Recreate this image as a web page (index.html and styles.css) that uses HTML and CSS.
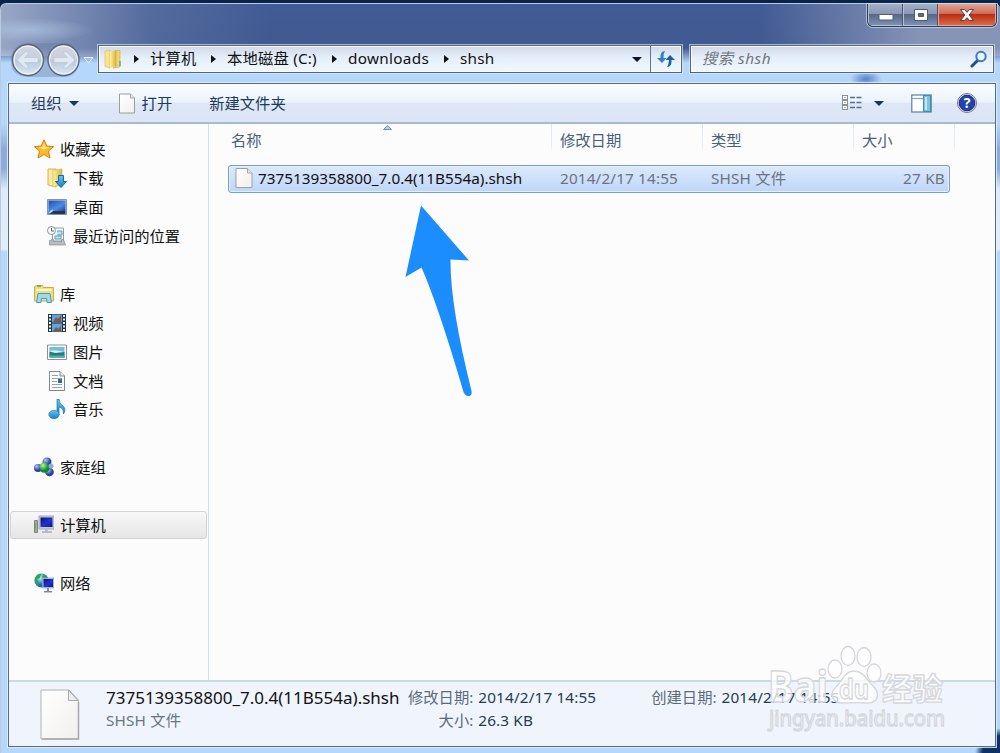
FILE: index.html
```
<!DOCTYPE html>
<html lang="zh-CN">
<head>
    <meta charset="UTF-8">
    <meta name="viewport" content="width=device-width, initial-scale=1.0">
    <title>shsh</title>
    <link rel="stylesheet" href="styles.css">
</head>
<body>
    <svg width="0" height="0" class="defs" aria-hidden="true">
        <defs>
            <linearGradient id="gold" x1="0" x2="1"><stop offset="0" stop-color="#fff2a6"/><stop offset="1" stop-color="#d9b23c"/></linearGradient>
            <linearGradient id="paper" x1="0" y1="0" x2="1" y2="1"><stop offset="0" stop-color="#ffffff"/><stop offset="1" stop-color="#f1f0ed"/></linearGradient>
            <linearGradient id="screen" x1="0" y1="0" x2="1" y2="1"><stop offset="0" stop-color="#08107a"/><stop offset="0.55" stop-color="#2433cc"/><stop offset="1" stop-color="#0a1290"/></linearGradient>
            <linearGradient id="desk" x1="0" y1="0" x2="1" y2="1"><stop offset="0" stop-color="#1d4db0"/><stop offset="0.6" stop-color="#4f8be6"/><stop offset="1" stop-color="#1b4595"/></linearGradient>
            <linearGradient id="blue" x1="0" y1="0" x2="0" y2="1"><stop offset="0" stop-color="#6cc3f0"/><stop offset="1" stop-color="#137fc8"/></linearGradient>
            <linearGradient id="round" x1="0" y1="0" x2="0" y2="1"><stop offset="0" stop-color="#d3d8e3"/><stop offset="0.48" stop-color="#c5cfdd"/><stop offset="0.52" stop-color="#b9c8da"/><stop offset="1" stop-color="#d9e9f8"/></linearGradient>
            <radialGradient id="ball" cx="0.35" cy="0.3"><stop offset="0" stop-color="#b9c4ff"/><stop offset="1" stop-color="#2a3ea8"/></radialGradient>
            <radialGradient id="green" cx="0.35" cy="0.3"><stop offset="0" stop-color="#b8f5a0"/><stop offset="1" stop-color="#128a2a"/></radialGradient>
            <radialGradient id="globe" cx="0.4" cy="0.3"><stop offset="0" stop-color="#c4f0ff"/><stop offset="1" stop-color="#1470b4"/></radialGradient>
        </defs>
    </svg>

    <div class="window">
        <header class="titlebar">
            <div class="controls">
                <button class="control"><svg width="16" height="8" viewBox="0 0 16 8"><rect x="1" y="1.5" width="14" height="5.5" rx="1" fill="#fff" stroke="#525a70"/></svg></button>
                <button class="control"><svg width="16" height="14" viewBox="0 0 16 14"><path d="M1.500 1.500h13v11h-13zM5.500 5.500v3h5v-3z" fill="#fff" fill-rule="evenodd" stroke="#525a70"/></svg></button>
                <button class="control close"><svg width="16" height="14" viewBox="0 0 16 14"><path d="M1.500 1.500h4L8 4.300l2.500-2.800h4L10.200 7l4.300 5.500h-4L8 9.700l-2.500 2.800h-4L5.800 7z" fill="#fff" stroke="#5a3a44"/></svg></button>
            </div>
        </header>

        <nav class="navbar">
            <svg class="arrows" width="88" height="36" viewBox="0 0 88 36">
                <path d="M3 14Q7 1 20 1h38q9 0 13 12v10q-4 11-13 12H20Q5 34 3 23z" fill="#61749a" opacity=".35"/>
                <circle cx="20" cy="18" r="15.500" fill="url(#round)" stroke="#586476" stroke-width="1.300"/>
                <circle cx="20" cy="18" r="14" fill="none" stroke="#f4f7fb" stroke-width="1"/>
                <path d="M9 18l8.500-8h4l-5 5.500H30v5H16.500l5 5.500h-4z" fill="#e2e9f2" stroke="#b6c2d0" stroke-width=".6"/>
                <circle cx="55.500" cy="18" r="15.500" fill="url(#round)" stroke="#586476" stroke-width="1.300"/>
                <circle cx="55.500" cy="18" r="14" fill="none" stroke="#f4f7fb" stroke-width="1"/>
                <path d="M67 18l-8.500-8h-4l5 5.500H46v5h13.500l-5 5.500h4z" fill="#e2e9f2" stroke="#b6c2d0" stroke-width=".6"/>
                <path d="M76 15.500h9l-4.500 5.500z" fill="#a9bdd8" stroke="#eaf3fd"/>
            </svg>
            <div class="address">
                <svg class="folder" width="18" height="20" viewBox="0 0 18 20"><path d="M1 2l5-1v18l-5-1.500z" fill="#f7e58c" stroke="#d8bd4c" stroke-width=".6"/><path d="M6 3l6-2v16l-6 2z" fill="url(#gold)"/><path d="M12 1.500h4V18l-7 1 3-2z" fill="#efd566" stroke="#c9a73b" stroke-width=".6"/><path d="M16 12v5" stroke="#62a9b5" stroke-width="1.500"/></svg>
                <div class="crumbs">
                    <i class="sep"></i><span class="c1">计算机</span>
                    <i class="sep"></i><span class="c2">本地磁盘 (C:)</span>
                    <i class="sep"></i><span class="c3">downloads</span>
                    <i class="sep"></i><span class="c4">shsh</span>
                </div>
                <i class="caret"></i>
                <div class="refresh">
                    <svg width="20" height="18" viewBox="0 0 20 18"><path d="M9 1Q4 1 4.500 8H1l5 5 4.500-5H7.500Q7 4 9 1z" fill="#2f82c4"/><path d="M11 17q5 0 4.500-7H19l-5-5-4.500 5h3.500q0 4-2 7z" fill="#1f5e9c"/></svg>
                </div>
            </div>
            <div class="search">
                <span>搜索 shsh</span>
                <svg width="18" height="18" viewBox="0 0 18 18"><path d="M2 16l5.500-5.500" stroke="#234e86" stroke-width="3" stroke-linecap="round"/><circle cx="11" cy="6.500" r="4.700" fill="#eef6fc" stroke="#3480bd" stroke-width="2"/></svg>
            </div>
        </nav>

        <main class="client">
            <div class="toolbar">
                <span class="organize">组织</span><i class="caret"></i>
                <svg class="open-icon" width="18" height="21" viewBox="0 0 18 21"><path d="M1.500 1h11L16.500 5v15h-15z" fill="url(#paper)" stroke="#9d9d9d"/><path d="M12.500 1v4h4" fill="#e5e5e5" stroke="#a8a8a8"/></svg>
                <span class="open">打开</span>
                <span class="new-folder">新建文件夹</span>
                <svg class="view" width="20" height="16" viewBox="0 0 20 16"><g fill="#fff" stroke="#8b8f94"><rect x=".5" y=".5" width="5" height="4"/><rect x=".5" y="5.500" width="5" height="4"/><rect x=".5" y="10.500" width="5" height="4"/></g><path d="M3 2v1M3 7v1M3 12v1" stroke="#456"/><path d="M8 2.500h12M8 7.500h12M8 12.500h12" stroke="#5c6f86" stroke-width="1.300" stroke-dasharray="5 1.500"/></svg>
                <i class="caret view-caret"></i>
                <svg class="pane" width="21" height="19" viewBox="0 0 21 19"><rect x=".8" y="1" width="19.400" height="17" fill="#fff" stroke="#5f7f9d" stroke-width="1.200"/><path d="M1 4.500h12" stroke="#89a0b5" stroke-width="1.200"/><rect x="12.500" y="1.500" width="7" height="16" fill="#79c3de" stroke="#418eaf"/><path d="M15 3v13" stroke="#c1e8f3" stroke-width="2"/></svg>
                <svg class="help" width="22" height="22" viewBox="0 0 22 22"><circle cx="11" cy="11" r="9.500" fill="#dedede" stroke="#777b88"/><circle cx="11" cy="11" r="7.800" fill="#2443b0" stroke="#172d82"/><text x="11" y="16" text-anchor="middle" class="help-mark">?</text></svg>
            </div>

            <div class="middle">
                <aside class="sidebar">
                    <ul>
                        <li class="root"><svg width="20" height="20" viewBox="0 0 20 20"><path d="M10 .8l2.800 6.200 6.700.6-5 4.600 1.500 6.800-6-3.600L4 19l1.500-6.800-5-4.600 6.700-.6z" fill="#ffbd2b" stroke="#d27b16"/><path d="M10 4l1.500 4 4 .5-6 2-4-2 3-.5z" fill="#ffe784"/></svg>收藏夹</li>
                        <li><svg width="20" height="20" viewBox="0 0 20 20"><path d="M1 1h8v18l-8-2z" fill="#f9e9a1" stroke="#d4b956"/><path d="M6 2l9-1v16l-9 2z" fill="url(#gold)" stroke="#d4b956" stroke-width=".7"/><path d="M11.500 7.500h5v6h3L14 19.500 8.500 13.500h3z" fill="url(#blue)" stroke="#16679d"/></svg>下载</li>
                        <li><svg width="20" height="20" viewBox="0 0 20 20"><path d="M.5 2.500h19v15H.5z" fill="#c9d2de" stroke="#8393aa"/><path d="M1.500 3.500h17v10.500h-17z" fill="url(#desk)"/><path d="M1.500 14h17v3h-17z" fill="#27364f"/><path d="M2 16l4-3" stroke="#8be0f4" stroke-width="2"/></svg>桌面</li>
                        <li><svg width="20" height="20" viewBox="0 0 20 20"><path d="M5.500 2h11v13h-11z" fill="#f6f9fc" stroke="#909ba5"/><path d="M10 5h5v4h-5M8 10h6v3H8z" fill="#b9e4f2" stroke="#5c9db8"/><path d="M2.500 14.500h2v-1h2v2h8v-2h2l2 5.500h-16z" fill="#b8bdc1" stroke="#868b90" stroke-width=".7"/><circle cx="4.500" cy="4.500" r="4" fill="#f8fafb" stroke="#8d979f"/><path d="M4.500 2v3h2.500" fill="none" stroke="#516575"/></svg>最近访问的位置</li>
                    </ul>
                    <ul>
                        <li class="root"><svg width="20" height="20" viewBox="0 0 20 20"><path d="M.5 17V2.500l2-1h6l1 2h10V17z" fill="#f1dc80" stroke="#c8ad4d"/><path d="M2 6h16" stroke="#fff5bf" stroke-width="2"/><path d="M2.500 18.500l1.500-9h12l1.500 9h-4.500l-.5-4H7.500l-.5 4z" fill="#9fd7ee" stroke="#489bc2"/><path d="M3 2h4" stroke="#75b84b" stroke-width="2"/></svg>库</li>
                        <li><svg width="20" height="20" viewBox="0 0 20 20"><path d="M1 1h18v18H1z" fill="#263640"/><path d="M5 1.500h10v8H5zM5 10.500h10v8H5z" fill="#5ba6df"/><path d="M6 9l3-5 2 2 3-4v7zM6 18l3-4 2 2 3-3v5z" fill="#8c5145"/><path d="M3 2v17M17 2v17" stroke="#e4f0ed" stroke-width="2" stroke-dasharray="2 1.500"/></svg>视频</li>
                        <li><svg width="20" height="20" viewBox="0 0 20 20"><path d="M.5 3h19v14.500H.5z" fill="#fff" stroke="#8a9296"/><path d="M2.500 5h15v10.500h-15z" fill="#70bddc"/><path d="M2.500 9q5-2 15 1v1h-15z" fill="#d4f0e9"/><path d="M2.500 9.500l6 1.500 9-1v5.500h-15z" fill="#247c79"/><path d="M2.500 13.500h15v2h-15z" fill="#55a9b8"/></svg>图片</li>
                        <li><svg width="20" height="20" viewBox="0 0 20 20"><path d="M2.500.500H13L17.500 5v14.500h-15z" fill="#fff" stroke="#7f878e"/><path d="M13 .5V5h4.500" fill="#e7edf2" stroke="#7f878e"/><path d="M5 4.500h6M5 7.500h10M5 10.500h5M5 13.500h10M5 16.500h10" stroke="#8da5bc"/><path d="M11 8h4v4h-4z" fill="#276ba9"/></svg>文档</li>
                        <li><svg width="20" height="20" viewBox="0 0 20 20"><path d="M10 0h2q0 4 4 7 3.500 3 .5 8 .5-6-4.500-7v8h-2z" fill="url(#blue)" stroke="#1674ae" stroke-width=".7"/><ellipse cx="7" cy="15.500" rx="5.300" ry="4.200" fill="url(#blue)" stroke="#1674ae" stroke-width=".5"/></svg>音乐</li>
                    </ul>
                    <ul>
                        <li class="root"><svg width="20" height="20" viewBox="0 0 20 20"><circle cx="13" cy="5" r="4.500" fill="url(#ball)"/><circle cx="4" cy="11" r="4" fill="url(#ball)"/><circle cx="15.500" cy="15" r="4.300" fill="url(#ball)"/><circle cx="10.500" cy="10.500" r="5.300" fill="url(#green)"/><circle cx="17" cy="9" r="2.500" fill="#8dadcb"/></svg>家庭组</li>
                    </ul>
                    <ul>
                        <li class="root selected"><svg width="20" height="20" viewBox="0 0 20 20"><path d="M.5 5.500h3v12h-3z" fill="#a1aa9d" stroke="#80877e"/><path d="M1.500 8v6" stroke="#59bd57"/><path d="M5 1h15v13H5z" fill="#c6ccda" stroke="#a5aab8"/><path d="M6.500 2.500h12v9.500h-12z" fill="url(#screen)"/><path d="M11 14h3v2h4v2H8v-2h3z" fill="#b7bdc4"/></svg>计算机</li>
                    </ul>
                    <ul>
                        <li class="root"><svg width="20" height="20" viewBox="0 0 20 20"><circle cx="7.500" cy="7.500" r="7" fill="url(#globe)"/><path d="M1 5q3-5 6-4l-1 4-3 1 2 4-1 3Q0 10 1 5zM10 1l4 4-3 2-3-3z" fill="#31a451"/><path d="M8.500 5h11.500v10H8.500z" fill="#bcc7de" stroke="#8e9bbb" stroke-width=".7"/><path d="M9.500 6h9.500v8H9.500z" fill="url(#screen)"/><path d="M13 15h2v3h3v1.500h-8V18h3z" fill="#7d8b9e"/></svg>网络</li>
                    </ul>
                </aside>

                <section class="files">
                    <div class="columns">
                        <span>名称</span><span>修改日期</span><span>类型</span><span>大小</span>
                        <svg class="sort" width="9" height="5" viewBox="0 0 9 5"><path d="M.5 4.500l4-4 4 4z" fill="#a7d4e8" stroke="#4c7f9c" stroke-width=".8"/></svg>
                    </div>
                    <div class="file">
                        <span class="file-name"><svg width="18" height="20" viewBox="0 0 18 20"><path d="M1 .5h11.500L17 5v14.500H1z" fill="url(#paper)" stroke="#9d9fa1"/><path d="M12.500.5V5H17" fill="#e8e8e8" stroke="#aaa"/></svg><span>7375139358800_7.0.4(11B554a).shsh</span></span>
                        <span class="wide">2014/2/17 14:55</span>
                        <span class="wide">SHSH 文件</span>
                        <span class="size">27 KB</span>
                    </div>
                    <svg class="pointer" width="70" height="196" viewBox="0 0 70 196"><path d="M17 .5L65 55.500L46.500 54.500Q46 100 67.500 186Q68.500 191 64 191Q61.500 191 59.500 187Q34 100 17.500 62.500L1.500 72z" fill="#1c8dff"/></svg>
                </section>
            </div>

            <footer class="details">
                <svg class="big-file" width="40" height="51" viewBox="0 0 40 51"><path d="M1 1h28l9.500 10v39H1z" fill="url(#paper)" stroke="#b1b2b2"/><path d="M38.500 13v37H2" fill="none" stroke="#a7a8a9" stroke-width="1.500"/><path d="M28.500 1l9.500 10.500h-9.500z" fill="#eee" stroke="#aaa"/></svg>
                <div class="detail-name"><strong>7375139358800_7.0.4(11B554a).shsh</strong><span class="wide">SHSH 文件</span></div>
                <dl class="modified">
                    <dt>修改日期:</dt><dd class="wide">2014/2/17 14:55</dd>
                    <dt>大小:</dt><dd class="wide">26.3 KB</dd>
                </dl>
                <dl class="created"><dt>创建日期:</dt><dd class="wide">2014/2/17 14:55</dd></dl>
            </footer>
        </main>
    </div>

    <svg class="watermark" width="190" height="96" viewBox="0 0 190 96">
        <g fill="#fff" fill-opacity=".75" stroke="#d6d7dc" stroke-width="1.300">
            <ellipse cx="67" cy="28" rx="7" ry="9"/><ellipse cx="80" cy="15" rx="7" ry="9.500"/><ellipse cx="96" cy="16" rx="7" ry="9.500"/><ellipse cx="106" cy="32" rx="7" ry="9"/>
            <path d="M86 30c-10 0-12 11-18 16-7 6-4 16 6 16 8 0 16-1 24 0 11 1 15-8 8-16-7-6-10-16-20-16z"/>
            <text x="0" y="61" class="brand" textLength="60" lengthAdjust="spacingAndGlyphs">Bai</text>
            <text x="71" y="58" class="brand-du" textLength="30" lengthAdjust="spacingAndGlyphs">du</text>
            <text x="114" y="59" class="brand-cn" textLength="61" lengthAdjust="spacingAndGlyphs">经验</text>
            <text x="1" y="85" class="site" textLength="176" lengthAdjust="spacingAndGlyphs">jingyan.baidu.com</text>
        </g>
    </svg>
</body>
</html>
```
FILE: styles.css
```
* {
    box-sizing: border-box;
}

body {
    margin: 0;
    width: 1000px;
    height: 753px;
    overflow: hidden;
    background: #082449;
    font-family: "Noto Sans", "Noto Sans CJK SC", sans-serif;
    font-size: 15.3px;
    line-height: 20px;
    color: #111;
}

.defs {
    position: absolute;
}

svg {
    display: block;
    flex: none;
}

ul, dl, dd {
    margin: 0;
    padding: 0;
    list-style: none;
}

.window {
    display: flex;
    flex-direction: column;
    height: 750px;
    margin-top: 3px;
    padding: 0 3px 6px 8px;
    border: 1px solid #bac9df;
    border-width: 1px 0 0 1px;
    border-radius: 6px 6px 0 0;
    background:
        radial-gradient(ellipse 65px 12px at 28px 26px, rgba(180, 205, 235, .6), transparent),
        radial-gradient(ellipse 16px 9px at 865px 75px, rgba(80, 120, 195, .9), transparent),
        radial-gradient(circle 26px at 1000px 750px, #0d3263 70%, transparent),
        linear-gradient(90deg, rgba(190, 199, 220, .7), rgba(110, 130, 172, .4) 15%, transparent 27%, transparent 76%, rgba(170, 178, 202, .65) 92%, rgba(170, 178, 202, .65)) 0 0 / 100% 52px no-repeat,
        linear-gradient(#425c94 0, #405990 44px, #b5d7fb 59px, #b5d7fb 120px, #8eabd8 145px, #8eabd8 165px, #dceafb 185px, #e2eefb 245px, #b5d7fb 248px, #b5d7fb);
}

/* title bar */
.titlebar {
    display: flex;
    justify-content: flex-end;
    flex: none;
    height: 39px;
}

.controls {
    display: flex;
    height: 23px;
    border: 1px solid #2b3b5c;
    border-top: 0;
    border-radius: 0 0 6px 6px;
    box-shadow: 0 0 0 1px rgba(224, 232, 245, .6);
    overflow: hidden;
}

.control {
    display: flex;
    align-items: center;
    justify-content: center;
    width: 35px;
    padding: 0;
    border: 1px solid #b7c0d2;
    border-right-color: #46546f;
    border-top: 0;
    background: linear-gradient(#a3afc6, #8997b4 48%, #566787 50%, #7e90b3);
}

.control:first-child {
    padding-top: 5px;
}

.close {
    width: 58px;
    border-color: #e4a69c;
    background: linear-gradient(#e3a493, #ce6e5b 45%, #b92e15 50%, #d96b43);
}

/* address and search */
.navbar {
    display: flex;
    flex: none;
    height: 40px;
}

.arrows {
    width: 88px;
    margin: -1px 0 0 -1px;
}

.address,
.search {
    display: flex;
    align-items: center;
    height: 28px;
    margin-top: 2px;
    border: 1px solid #536581;
    box-shadow: 0 0 0 1px rgba(220, 232, 248, .65), inset 0 0 0 1px #fafdff;
    background: linear-gradient(#d2d7e6, #e5effa 45%, #f1f8ff);
}

.address {
    width: 584px;
    margin-left: 2px;
}

.folder {
    margin-left: 5px;
}

.crumbs {
    display: flex;
    flex: 1;
    align-items: center;
}

.crumbs span {
    margin-top: -3px;
    white-space: nowrap;
    letter-spacing: .2px;
}

.sep {
    flex: none;
    border: 4px solid transparent;
    border-left: 5px solid #111;
    border-right: 0;
    margin: 0 11px 0 13px;
}

.sep:first-child {
    margin-left: 12px;
}

.c1 {
    width: 48px;
}

.c2 {
    width: 92px;
}

.crumbs .c3 {
    width: 83px;
    letter-spacing: .3px;
}

.caret {
    flex: none;
    border: 5px solid transparent;
    border-top-color: #17365f;
    border-bottom: 0;
}

.address .caret {
    margin-right: 8px;
    border-top-color: #11112a;
}

.refresh {
    display: flex;
    align-items: center;
    justify-content: center;
    width: 31px;
    height: 26px;
    border-left: 1px solid #65758d;
}

.search {
    justify-content: space-between;
    width: 304px;
    margin-left: 8px;
    padding: 0 5px 0 11px;
    color: #71757e;
    font-style: italic;
}

.search span {
    margin-top: -2px;
    letter-spacing: .5px;
}

/* client area */
.client {
    display: flex;
    flex: 1;
    flex-direction: column;
    min-height: 0;
    width: 988px;
    margin-left: -1px;
    border: 1px solid #566a84;
    background: #fcfcfd;
    box-shadow: 0 0 0 1px rgba(230, 241, 252, .8);
}

.toolbar {
    display: flex;
    flex: none;
    align-items: center;
    height: 40px;
    padding: 0 17px 0 22px;
    border-bottom: 2px solid #a9b9cf;
    background: linear-gradient(#fafdff, #eaf3fc 48%, #dde7f5 50%, #dbe5f3);
    color: #1e395b;
}

.toolbar span {
    margin-top: -1px;
}

.toolbar .caret {
    margin-left: 7px;
}

.open-icon {
    margin-left: 39px;
}

.open {
    margin-left: 6px;
}

.new-folder {
    margin-left: 37px;
}

.view {
    margin-left: auto;
}

.toolbar .view-caret {
    margin: 0 27px 0 12px;
}

.help {
    margin-left: 24px;
}

.help-mark {
    fill: #fff;
    font-size: 14px;
    font-weight: 700;
}

.middle {
    display: flex;
    flex: 1;
    min-height: 0;
}

.sidebar {
    display: flex;
    flex-direction: column;
    gap: 28.9px;
    flex: none;
    width: 200px;
    padding: 11px 1px 0;
    border-right: 1px solid #cfdfed;
}

.sidebar li {
    display: flex;
    align-items: center;
    gap: 6px;
    height: 28.9px;
    padding-left: 36px;
    border: 1px solid transparent;
}

.sidebar .root {
    padding-left: 23px;
}

.sidebar .selected {
    border-color: #d3d3d3;
    border-radius: 3px;
    background: linear-gradient(#f8f8f8, #e6e6e6);
}

.files {
    position: relative;
    flex: 1;
}

.columns,
.file {
    display: grid;
    grid-template-columns: 324px 151px 151px 101px;
}

.columns {
    position: relative;
    height: 33px;
    margin-left: 19px;
    color: #4b6078;
}

.columns span {
    height: 29px;
    padding: 6px 0 0 3px;
    border-right: 1px solid;
    border-image: linear-gradient(#dce7f3, #e5edf6 70%, transparent) 1;
}

.columns span + span {
    padding-left: 8px;
}

.sort {
    position: absolute;
    left: 155px;
    top: 1px;
}

.file {
    grid-template-columns: 324px 151px 151px 1fr;
    align-items: center;
    width: 722px;
    height: 28px;
    margin: 8px 0 0 19px;
    border: 1px solid #7e9ebd;
    border-radius: 3px;
    background: linear-gradient(#dce9fc, #bfd6fa);
    box-shadow: inset 0 0 0 1px #e3effd;
    color: #6c7480;
}

.file > span {
    padding-left: 7px;
    padding-bottom: 2px;
}

.file > .file-name {
    display: flex;
    align-items: center;
    gap: 5px;
    padding-left: 6px;
    color: #111;
}

.wide {
    letter-spacing: .15px;
}

.file .size {
    padding-right: 4px;
    letter-spacing: .2px;
    text-align: right;
}

.pointer {
    position: absolute;
    left: 195px;
    top: 81px;
}

/* details pane */
.details {
    display: flex;
    flex: none;
    height: 66px;
    padding: 7px 0 0 31px;
    border-top: 2px solid #ccd9e8;
    background: #f0f4fc;
    line-height: 23px;
}

.detail-name {
    display: flex;
    flex-direction: column;
    width: 294px;
    margin: -3px 0 0 26px;
    color: #697687;
}

.detail-name strong {
    color: #111;
    font-size: 17px;
    font-weight: 400;
}

.details dl {
    display: grid;
    grid-template-columns: auto auto;
    align-content: start;
    column-gap: 5px;
    margin-top: -3px;
    color: #263b53;
    white-space: nowrap;
}

.details dt {
    color: #5b6b7e;
    text-align: right;
}

.details .modified {
    margin-left: 8px;
}

.details .created {
    margin-left: 55px;
}

.watermark {
    position: absolute;
    left: 768px;
    top: 641px;
    overflow: visible;
}

.brand,
.brand-cn {
    font-size: 43px;
    font-weight: 700;
}

.brand-cn {
    font-size: 31px;
}

.brand-du {
    font-size: 27px;
    font-weight: 700;
}

.site {
    font-size: 21px;
}
```
